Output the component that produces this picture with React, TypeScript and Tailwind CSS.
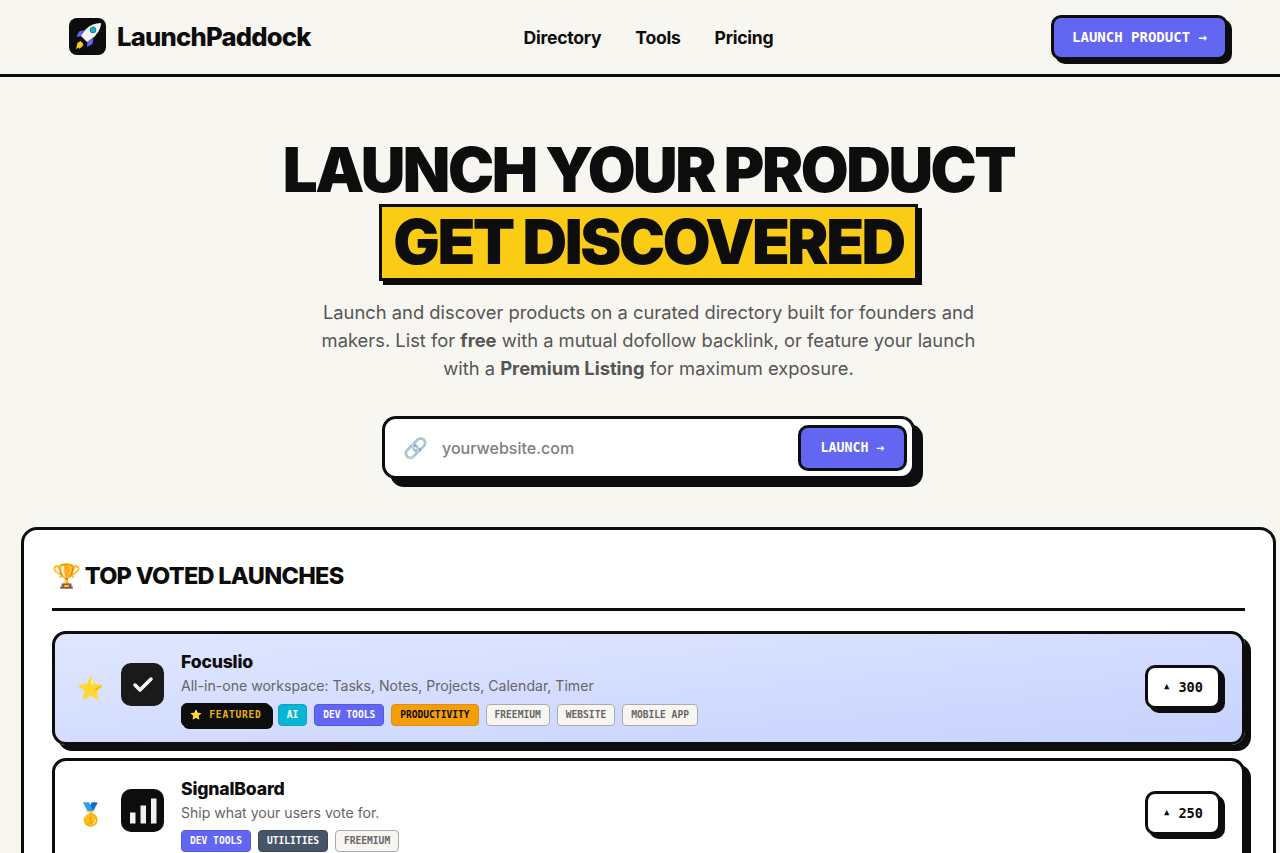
import React from 'react';
import { Check } from 'lucide-react';

const mono = "font-['DejaVu_Sans_Mono','Liberation_Mono',monospace]";

const tagStyles: Record<string, string> = {
  featured: 'bg-[#0d0d0d] border-[#0d0d0d] text-[#eab308] h-[24px] rounded-md shadow-[2px_2px_0_#0d0d0d] tracking-[0.08em]',
  cyan: 'bg-[#06b6d4] border-[#0aa5c0] text-white',
  indigo: 'bg-[#6366f1] border-[#5558e0] text-white',
  amber: 'bg-[#f59e0b] border-[#e08f08] text-[#0d0d0d]',
  slate: 'bg-[#475569] border-[#3d4a5c] text-white',
  plain: 'bg-[#f8f6f1] border-[#aaaaaa] text-[#666]',
};

type Tag = { label: string; kind: string };

const Badge = ({ label, kind }: Tag) => (
  <span
    className={`${mono} inline-flex items-center h-[22px] px-2 rounded border text-[9.6px] font-bold whitespace-nowrap ${tagStyles[kind]}`}
  >
    {label}
  </span>
);

const VoteButton = ({ count }: { count: number }) => (
  <button className="flex items-center justify-center gap-[9px] w-[76px] h-[44px] mr-[4px] mb-[2px] pl-[1px] bg-white border-[3px] border-[#0d0d0d] rounded-[10px] shadow-[4px_4px_0_#0d0d0d] text-[#0d0d0d]">
    <span className={`${mono} text-[9px]`}>▲</span>
    <span className={`${mono} text-[13.6px] font-bold`}>{count}</span>
  </button>
);

const Bars = () => (
  <svg width="28" height="28" viewBox="0 0 28 28">
    <rect x="1" y="15.5" width="5.5" height="11" fill="#f0f0f0" />
    <rect x="11.5" y="8.5" width="5.5" height="18" fill="#f0f0f0" />
    <rect x="22" y="1.5" width="5.5" height="25" fill="#f0f0f0" />
  </svg>
);

const Rocket = () => (
  <svg width="37" height="37" viewBox="0 0 37 37">
    <path d="M16 12 L10 13.5 L7.5 19 L13 18Z" fill="#6366f1" />
    <path d="M24.5 20 L23.5 26 L18 29 L18.5 23.5Z" fill="#6366f1" />
    <path d="M11.5 23 L8.5 25 L7 31 L10 29.5 L10.5 31 L14.5 27 L13.5 25Z" fill="#facc15" />
    <path d="M32 5 C26 5 21 7 17 11 L12 18 L18 24 L25 19 C29 15 32 10 32 5Z" fill="#f4f4f5" />
    <circle cx="24" cy="12" r="3" fill="#06b6d4" stroke="#3f3f46" strokeWidth="0.6" />
  </svg>
);

const focuslioTags: Tag[] = [
  { label: '⭐ FEATURED', kind: 'featured' },
  { label: 'AI', kind: 'cyan' },
  { label: 'DEV TOOLS', kind: 'indigo' },
  { label: 'PRODUCTIVITY', kind: 'amber' },
  { label: 'FREEMIUM', kind: 'plain' },
  { label: 'WEBSITE', kind: 'plain' },
  { label: 'MOBILE APP', kind: 'plain' },
];

const signalTags: Tag[] = [
  { label: 'DEV TOOLS', kind: 'indigo' },
  { label: 'UTILITIES', kind: 'slate' },
  { label: 'FREEMIUM', kind: 'plain' },
];

type Launch = {
  rank: string;
  name: string;
  desc: string;
  tags: Tag[];
  votes: number;
  tile: React.ReactNode;
  tileBg: string;
  box: string;
};

const launches: Launch[] = [
  {
    rank: '⭐',
    name: 'Focuslio',
    desc: 'All-in-one workspace: Tasks, Notes, Projects, Calendar, Timer',
    tags: focuslioTags,
    votes: 300,
    tile: <Check size={24} strokeWidth={3.5} className="text-white" />,
    tileBg: 'bg-[#1a1a1a]',
    box: 'bg-gradient-to-br from-[#e0e7ff] to-[#c7d2fe]',
  },
  {
    rank: '🥇',
    name: 'SignalBoard',
    desc: 'Ship what your users vote for.',
    tags: signalTags,
    votes: 250,
    tile: <Bars />,
    tileBg: 'bg-[#0d0d0d]',
    box: 'bg-white',
  },
];

export default function App() {
  return (
    <div className="h-[853px] overflow-hidden bg-[#f8f6f1] text-[#0d0d0d] font-['Inter',sans-serif]">
      <div className="w-[1297px]">
        <header className="grid grid-cols-[1fr_auto_1fr] items-center h-[77px] px-[69px] border-b-[3px] border-[#0d0d0d]">
          <a className="flex items-center gap-[11px]">
            <span className="flex items-center justify-center w-[37px] h-[37px] rounded-lg bg-[#0d0d0d]">
              <Rocket />
            </span>
            <span className="pt-[1px] text-[25.6px] font-extrabold tracking-[-0.03em]">LaunchPaddock</span>
          </a>
          <nav className="flex items-center gap-[34px] pt-[2px] text-[17.6px] font-bold tracking-[-0.015em]">
            <a>Directory</a>
            <a>Tools</a>
            <a>Pricing</a>
          </nav>
          <button className={`${mono} justify-self-end h-[45px] w-[177px] bg-[#6366f1] border-[3px] border-[#0d0d0d] rounded-[10px] shadow-[4px_4px_0_#0d0d0d] text-white text-[14px] font-bold`}>
            LAUNCH PRODUCT →
          </button>
        </header>

        <section className="flex flex-col items-center pt-[59px]">
          <h1 className="text-[61.8px] leading-[68px] font-black tracking-[-0.04em] text-center">LAUNCH YOUR PRODUCT</h1>
          <div className="px-[11px] h-[77px] flex items-center bg-[#facc15] border-[3px] border-[#0d0d0d] shadow-[4px_4px_0_#0d0d0d] text-[61.8px] font-black tracking-[-0.04em]">
            GET DISCOVERED
          </div>
          <p className="mt-[17px] w-[680px] text-center text-[18.35px] leading-[28px] text-[#555]">
            Launch and discover products on a curated directory built for founders and makers. List for{' '}
            <strong className="font-bold">free</strong> with a mutual dofollow backlink, or feature your launch with a{' '}
            <strong className="font-bold">Premium Listing</strong> for maximum exposure.
          </p>
          <div className="mt-[34px] flex items-center w-[533px] h-[63px] pl-[18px] pr-[5px] bg-white border-[3px] border-[#0d0d0d] rounded-[14px] shadow-[8px_8px_0_#0d0d0d]">
            <span className="text-[20px] opacity-70 leading-none">🔗</span>
            <span className="ml-[14px] flex-1 text-[16px] font-medium text-[#808080]">yourwebsite.com</span>
            <button className={`${mono} w-[109px] h-[46px] bg-[#6366f1] border-[3px] border-[#0d0d0d] rounded-[10px] text-white text-[13.3px] font-bold`}>
              LAUNCH →
            </button>
          </div>
        </section>

        <main className="mt-[48px] mx-auto w-[1255px] h-[400px] px-[28px] pt-[28px] bg-white border-[3px] border-[#0d0d0d] rounded-t-[16px]">
          <h2 className="pb-[14px] border-b-[3px] border-[#0d0d0d] text-[23.5px] leading-[36px] font-extrabold tracking-[-0.03em]">
            🏆 TOP VOTED LAUNCHES
          </h2>
          <div className="mt-[20px] flex flex-col gap-[13px]">
            {launches.map(item => (
              <article
                key={item.name}
                className={`flex items-center pt-[15px] pb-[15px] pl-[22px] pr-[17px] border-[3px] border-[#0d0d0d] rounded-[14px] shadow-[6px_6px_0_#0d0d0d] ${item.box}`}
              >
                <span className="w-[25px] text-center text-[22px] leading-none">{item.rank}</span>
                <span className={`ml-[19px] mb-[7px] flex items-center justify-center w-[43px] h-[43px] rounded-[10px] ${item.tileBg}`}>
                  {item.tile}
                </span>
                <div className="ml-[17px] flex-1">
                  <h3 className="text-[17.6px] leading-[26px] font-extrabold tracking-[-0.01em]">{item.name}</h3>
                  <p className="text-[14.08px] leading-[22px] text-[#666]">{item.desc}</p>
                  <div className="mt-[6px] flex items-center gap-[7px]">
                    {item.tags.map(t => <Badge key={t.label} {...t} />)}
                  </div>
                </div>
                <VoteButton count={item.votes} />
              </article>
            ))}
          </div>
        </main>
      </div>
    </div>
  );
}
